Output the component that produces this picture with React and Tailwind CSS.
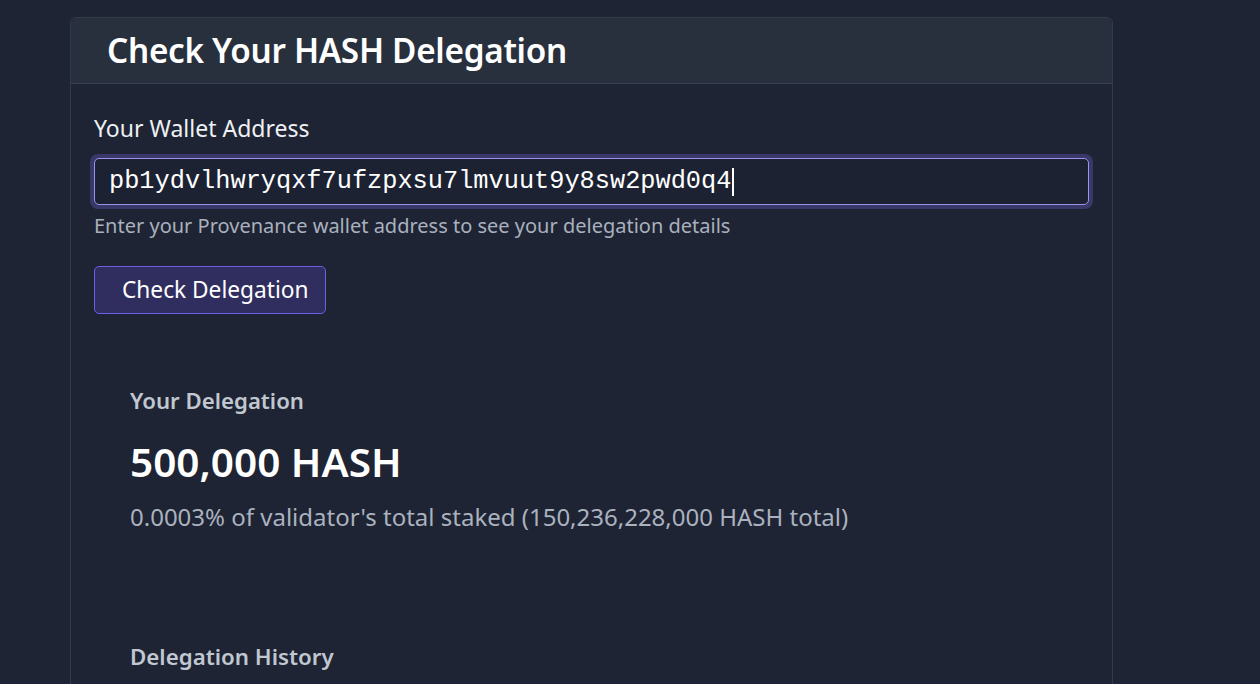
export default function App() {
  return (
    <div className="min-h-[684px] w-full bg-[#1e2433] pt-[17px] font-['Noto_Sans',sans-serif]">
      <div className="ml-[70px] w-[1043px] rounded-md border border-[#333b4b] bg-[#1e2433]">
        <div className="flex h-[66px] items-center rounded-t-md border-b border-[#394152] bg-[#282f3d] pl-[36px]">
          <h1 className="text-[33.3px] font-semibold leading-none tracking-[-0.3px] text-white">Check Your HASH Delegation</h1>
        </div>
        <div className="px-[23px] pt-[29px]">
          <label className="block text-[23px] leading-[30px] text-[#eef0f4]">Your Wallet Address</label>
          <div className="mt-[11px] rounded-[8px] bg-[#3a3769] p-[4px] -mx-[4px]">
            <div className="flex h-[47px] items-center rounded-[5px] border border-[#9c94ec] bg-[#1c2232] pl-[14px]">
              <span className="font-['Liberation_Mono',monospace] text-[25.3px] text-white">pb1ydvlhwryqxf7ufzpxsu7lmvuut9y8sw2pwd0q4</span>
              <span className="ml-[1px] h-[28px] w-[2px] bg-white" />
            </div>
          </div>
          <p className="mt-[3px] text-[20px] leading-[28px] text-[#a9b1be]">Enter your Provenance wallet address to see your delegation details</p>
          <button className="mt-[26px] h-[48px] rounded-[5px] border border-[#6d5ee8] bg-[#302e5e] pl-[27px] pr-[16px] text-[22.7px] text-white">Check Delegation</button>
          <div className="px-[36px] pt-[72px]">
            <h2 className="text-[22.2px] font-semibold leading-[30px] text-[#c1c7d1]">Your Delegation</h2>
            <div className="mt-[23px] text-[40.5px] font-semibold leading-[46px] text-white">500,000 HASH</div>
            <p className="mt-[17px] text-[24px] leading-[30px] text-[#aab2bf]">0.0003% of validator's total staked (150,236,228,000 HASH total)</p>
            <h2 className="mt-[110px] text-[22.3px] font-semibold leading-[30px] text-[#c1c7d1]">Delegation History</h2>
            <div className="h-[40px]" />
          </div>
        </div>
      </div>
    </div>
  );
}
